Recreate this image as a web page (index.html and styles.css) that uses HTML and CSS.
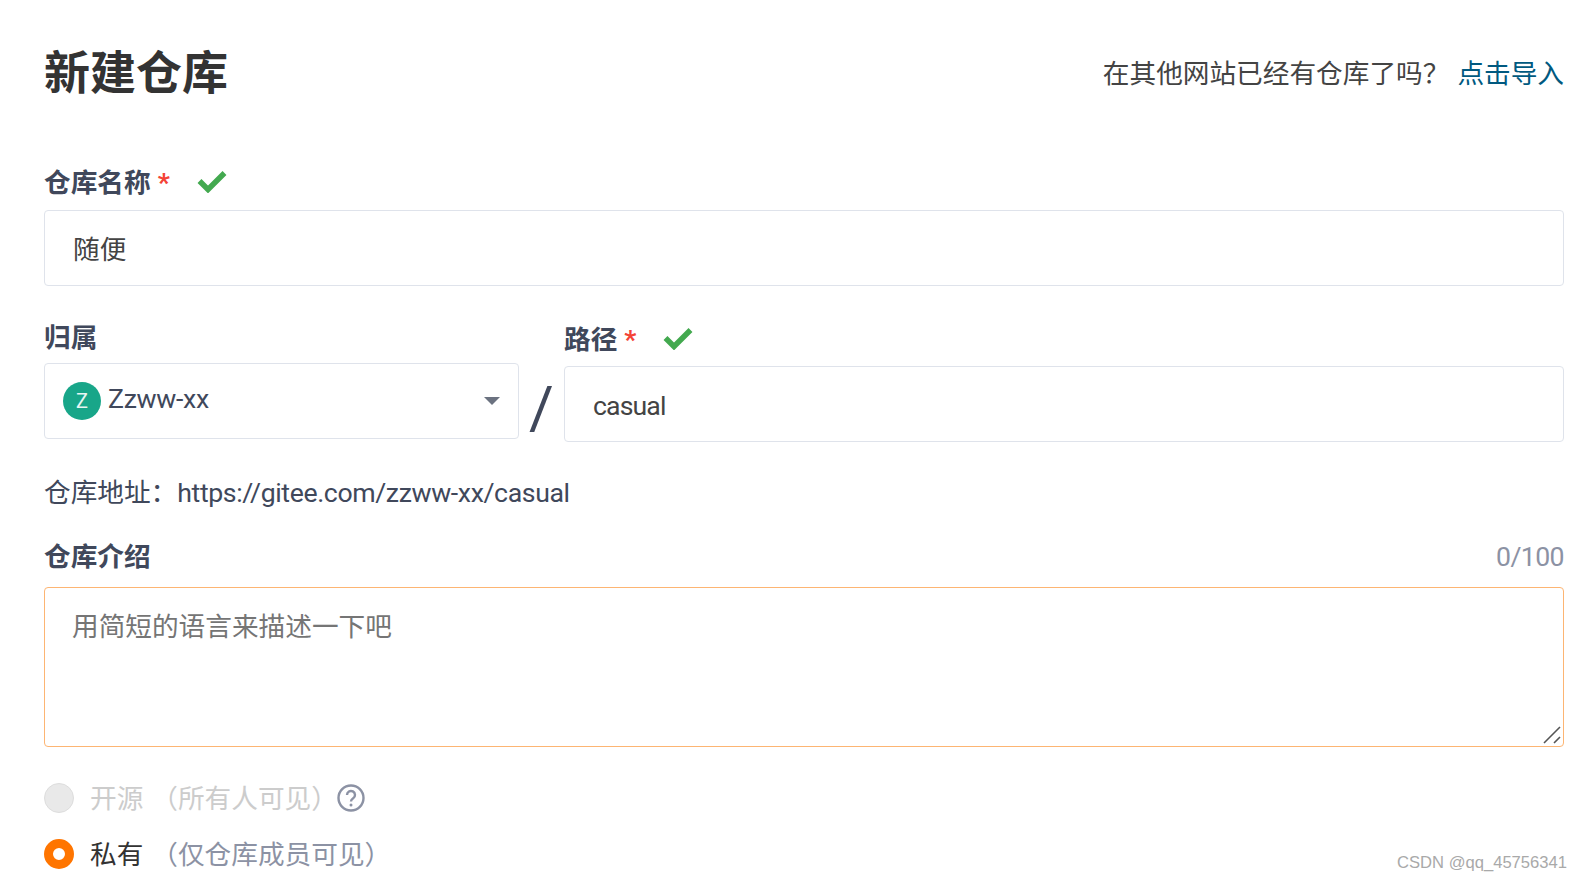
FILE: index.html
```html
<!DOCTYPE html>
<html lang="zh-CN">
<head>
    <meta charset="UTF-8">
    <title>新建仓库</title>
    <link rel="stylesheet" href="styles.css">
</head>
<body>
    <main class="page">
        <!-- 标题 -->
        <header class="page-head">
            <h1>新建仓库</h1>
            <p class="import-tip">在其他网站已经有仓库了吗？<a href="#">点击导入</a></p>
        </header>

        <!-- 仓库名称 -->
        <section class="name-group">
            <div class="label-row">
                <span class="label">仓库名称</span><span class="star">*</span>
                <svg class="ok" viewBox="0 0 30 24"><path d="M2.5 12l8.5 8.5L27.5 4"/></svg>
            </div>
            <div class="box">随便</div>
        </section>

        <!-- 归属 / 路径 -->
        <section class="path-row">
            <div class="owner-col">
                <div class="label-row"><span class="label">归属</span></div>
                <div class="box owner-box">
                    <span class="avatar">Z</span>
                    <span class="owner-name">Zzww-xx</span>
                    <span class="caret"></span>
                </div>
            </div>
            <div class="slash">/</div>
            <div class="path-col">
                <div class="label-row">
                    <span class="label">路径</span><span class="star">*</span>
                    <svg class="ok" viewBox="0 0 30 24"><path d="M2.5 12l8.5 8.5L27.5 4"/></svg>
                </div>
                <div class="box path-box">casual</div>
            </div>
        </section>

        <p class="repo-url">仓库地址：<span class="url-text">https://gitee.com/zzww-xx/casual</span></p>

        <!-- 仓库介绍 -->
        <section class="desc-group">
            <div class="desc-head">
                <span class="label">仓库介绍</span>
                <span class="count">0/100</span>
            </div>
            <div class="desc-box">
                用简短的语言来描述一下吧
                <svg class="grip" viewBox="0 0 18 18"><path d="M1 17L17 1M11 17l6-6"/></svg>
            </div>
        </section>

        <!-- 是否开源 -->
        <section class="radios">
            <div class="radio-row disabled">
                <span class="radio"></span>
                <span class="radio-text">开源</span>
                <span class="radio-note">（所有人可见）</span>
                <svg class="help" viewBox="0 0 28 28"><circle cx="14" cy="14" r="12.5"/><path d="M10 11a4 4 0 1 1 6.2 3.3c-1.5 1-2.2 1.7-2.2 3.2"/><circle class="dot" cx="14" cy="21" r="1.5"/></svg>
            </div>
            <div class="radio-row">
                <span class="radio on"></span>
                <span class="radio-text">私有</span>
                <span class="radio-note">（仅仓库成员可见）</span>
            </div>
        </section>
    </main>

    <div class="watermark">CSDN @qq_45756341</div>
</body>
</html>
```

FILE: styles.css
```css
* {
    margin: 0;
    padding: 0;
    box-sizing: border-box;
}

html, body {
    height: 880px;
    overflow: hidden;
}

body {
    background: #fff;
    color: #40485b;
    font-family: Roboto, "Noto Sans CJK SC", sans-serif;
    font-size: 26.67px;
    line-height: 38px;
}

.page {
    padding: 0 18px 0 44px;
}

.page-head {
    display: flex;
    justify-content: space-between;
    align-items: center;
    height: 164px;
    padding-bottom: 17px;
}

.page-head h1 {
    font-size: 46px;
    font-weight: 700;
    color: #333;
    line-height: 60px;
    margin-top: -1px;
}

.import-tip {
    color: #444;
}

.import-tip a {
    color: #005980;
    text-decoration: none;
    margin-left: 8px;
}

.label-row {
    display: flex;
    align-items: center;
    height: 38px;
}

.label {
    font-weight: 700;
    color: #40485b;
}

.star {
    color: #f44336;
    font-weight: 700;
    margin-left: 7px;
}

.ok {
    width: 30px;
    height: 24px;
    margin: -4px 0 0 27px;
}

.ok path {
    fill: none;
    stroke: #43a94f;
    stroke-width: 5.5;
}

.box {
    height: 76px;
    border: 1px solid #dfe3eb;
    border-radius: 4px;
    padding: 4px 28px 0;
    display: flex;
    align-items: center;
    color: #444;
}

.name-group .label-row {
    margin-bottom: 8px;
}

.path-row {
    display: flex;
    margin-top: 33px;
}

.owner-col {
    width: 475px;
}

.owner-col .label-row {
    margin-bottom: 6px;
}

.path-col {
    flex: 1;
}

.path-col .label-row {
    margin: 2px 0 7px;
}

.path-box {
    letter-spacing: -0.9px;
}

.owner-box {
    padding: 0 18px;
    color: #40485b;
}

.avatar {
    width: 38px;
    height: 38px;
    border-radius: 50%;
    background: #18a689;
    color: #e8f6f3;
    font-size: 20px;
    display: flex;
    align-items: center;
    justify-content: center;
    margin-right: 7px;
}

.owner-name {
    flex: 1;
    margin-top: -4px;
    letter-spacing: -0.3px;
}

.caret {
    border: 8px solid transparent;
    border-top: 8px solid #6b7280;
    border-bottom: 0;
}

.slash {
    width: 45px;
    text-align: center;
    font-size: 60px;
    line-height: 60px;
    padding-top: 59px;
    color: #40485b;
}

.repo-url {
    margin-top: 32px;
}

.url-text {
    letter-spacing: -0.38px;
}

.desc-group {
    margin-top: 26px;
}

.desc-head {
    display: flex;
    justify-content: space-between;
    margin-bottom: 11px;
}

.count {
    color: #8c92a4;
    letter-spacing: -0.6px;
}

.desc-box {
    position: relative;
    height: 160px;
    border: 1px solid #fdb573;
    border-radius: 4px;
    padding: 20px 27px;
    color: #757575;
}

.grip {
    position: absolute;
    right: 2px;
    bottom: 2px;
    width: 18px;
    height: 18px;
}

.grip path {
    fill: none;
    stroke: #555;
    stroke-width: 1.6;
}

.radios {
    margin-top: 32px;
}

.radio-row {
    display: flex;
    align-items: center;
    height: 38px;
    margin-bottom: 18px;
}

.radio {
    width: 30px;
    height: 30px;
    border-radius: 50%;
    margin-right: 16px;
}

.disabled .radio {
    background: #e9e9e9;
    border: 1px solid #ddd;
}

.radio.on {
    background: #fff;
    border: 9px solid #ff7500;
}

.radio-text {
    color: #333;
    padding-top: 2px;
}

.radio-note {
    color: #8c92a4;
    margin-left: 8px;
    padding-top: 2px;
}

.disabled .radio-text,
.disabled .radio-note {
    color: #ccc;
}

.help {
    width: 28px;
    height: 28px;
    margin-left: -1px;
}

.help circle,
.help path {
    fill: none;
    stroke: #8c92a4;
    stroke-width: 2.4;
}

.help .dot {
    fill: #8c92a4;
    stroke: none;
}

.watermark {
    position: absolute;
    right: 15px;
    bottom: 7px;
    font-family: "Liberation Sans", sans-serif;
    font-size: 16.6px;
    line-height: 20px;
    color: #a9a9a9;
}
```
